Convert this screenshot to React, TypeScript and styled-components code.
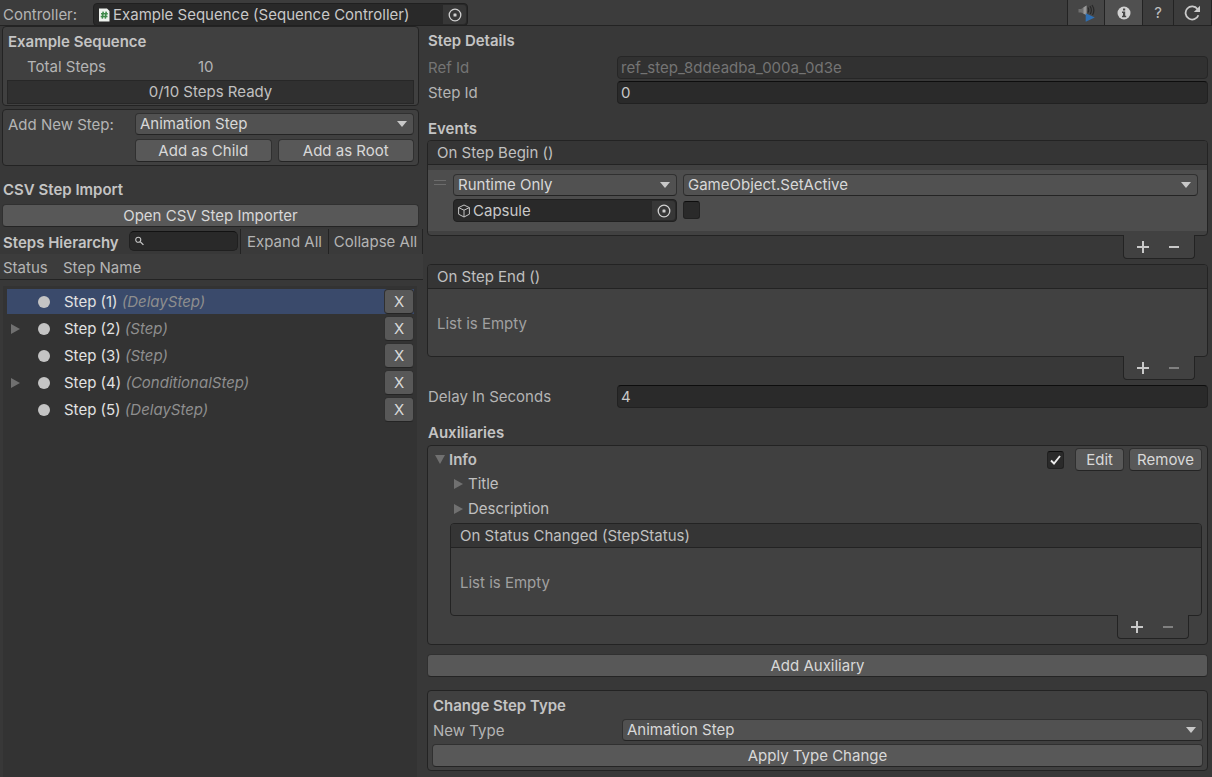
import React, { useId, useState } from "react";
import styled, { createGlobalStyle, css } from "styled-components";

const GlobalStyle = createGlobalStyle`
  *, *::before, *::after { box-sizing: border-box; }
  body {
    margin: 0;
    background: #383838;
    color: #b4b4b4;
    font: 400 15px/22px Inter, "Liberation Sans", sans-serif;
  }
  button, input, select { font: inherit; color: inherit; margin: 0; }
  h2, h3, p { margin: 0; font-size: 15px; line-height: 22px; }
`;

const line = "#232323";

const Window = styled.div`
  min-height: 100vh;
  display: flex;
  flex-direction: column;
`;

const Toolbar = styled.header`
  display: flex;
  align-items: stretch;
  height: 26px;
  background: #3c3c3c;
  border-bottom: 1px solid ${line};
`;

const ToolbarLabel = styled.span`
  width: 93px;
  padding: 4px 0 0 3px;
`;

const ToolbarSpacer = styled.div`
  flex: 1;
`;

const ToolbarButton = styled.button<{ $width: number; $tone?: string }>`
  display: flex;
  align-items: center;
  justify-content: center;
  width: ${(p) => p.$width}px;
  padding: 0;
  border: 0;
  border-left: 1px solid ${line};
  background: ${(p) => p.$tone ?? "transparent"};
  color: #c0c0c0;

  &:last-child { border-right: 1px solid ${line}; }
`;

const ObjectBox = styled.div<{ $toolbar?: boolean }>`
  display: flex;
  align-items: center;
  height: 23px;
  padding: 1px 1px 1px 4px;
  gap: 3px;
  background: #292929;
  border: 1px solid #202020;
  border-radius: 4px;
  color: #c8c8c8;
  ${(p) =>
    p.$toolbar &&
    css`
      width: 375px;
      margin-top: 3px;
    `}
`;

const ObjectName = styled.span`
  flex: 1;
  white-space: nowrap;
`;

const PickerButton = styled.button`
  display: flex;
  align-items: center;
  justify-content: center;
  align-self: stretch;
  width: 23px;
  padding: 0;
  border: 0;
  border-radius: 0 3px 3px 0;
  background: #373737;
  color: #d0d0d0;
`;

const Columns = styled.div`
  flex: 1;
  display: flex;
  align-items: stretch;
`;

const Sidebar = styled.aside`
  width: 423px;
  flex: none;
  display: flex;
  flex-direction: column;
`;

const SidebarTop = styled.div`
  display: flex;
  flex-direction: column;
  gap: 3px;
  padding: 0 4px 0 2px;
`;

const Details = styled.main`
  flex: 1;
  min-width: 0;
  padding: 4px 4px 6px 4px;
`;

const Panel = styled.section`
  background: #404040;
  border: 1px solid ${line};
  border-radius: 4px;
`;

const SummaryPanel = styled(Panel)`
  height: 80px;
  padding: 4px 4px 2px;
`;

const AddPanel = styled(Panel)`
  display: grid;
  grid-template-columns: 121px 1fr 1fr;
  column-gap: 6px;
  row-gap: 3px;
  padding: 3px 4px 3px 5px;

  > label { grid-column: 1; padding-top: 1px; }
  > div { grid-column: 2 / 4; }
  > button:nth-of-type(1) { grid-column: 2; }
`;

const Heading = styled.h2`
  font-weight: 600;
  color: #c4c4c4;
  padding-left: 1px;
`;

const TotalRow = styled.dl`
  display: flex;
  margin: 3px 0 2px;
  padding-left: 20px;

  dt { width: 171px; }
  dd { margin: 0; }
`;

const Progress = styled.div`
  height: 24px;
  line-height: 22px;
  text-align: center;
  background: #303030;
  border: 1px solid #272727;
  color: #c0c0c0;
`;

const Button = styled.button<{ $block?: boolean }>`
  display: block;
  height: 23px;
  min-width: 49px;
  padding: 0 7px;
  line-height: 21px;
  text-align: center;
  white-space: nowrap;
  background: #585858;
  border: 1px solid #303030;
  border-bottom-color: #242424;
  border-radius: 4px;
  color: #d8d8d8;
  ${(p) => p.$block && "width: 100%;"}
`;

const SelectBox = styled.div`
  position: relative;
  min-width: 0;

  select {
    appearance: none;
    display: block;
    width: 100%;
    height: 22px;
    padding: 0 24px 0 4px;
    line-height: 20px;
    background: #515151;
    border: 1px solid #303030;
    border-bottom-color: #242424;
    border-radius: 4px;
    color: #d8d8d8;
  }

  svg {
    position: absolute;
    right: 7px;
    top: 8px;
    pointer-events: none;
  }
`;

const HierarchyBar = styled.div`
  display: flex;
  align-items: stretch;
  height: 25px;
  margin-top: 2px;
  padding-left: 3px;
`;

const HierarchyTitle = styled.h2`
  width: 126px;
  padding-top: 3px;
  font-weight: 600;
  color: #c4c4c4;
  white-space: nowrap;
`;

const SearchBox = styled.label`
  display: flex;
  align-items: center;
  flex: 1;
  min-width: 0;
  height: 20px;
  margin: 2px 2px 0 0;
  padding-left: 5px;
  background: #292929;
  border: 1px solid #202020;
  border-top-color: #121212;
  border-radius: 5px;

  input {
    min-width: 0;
    width: 100%;
    height: 18px;
    padding: 0 4px;
    border: 0;
    background: transparent;
    outline: 0;
  }
`;

const BarButton = styled.button<{ $width: number; $last?: boolean }>`
  width: ${(p) => p.$width}px;
  padding: 0;
  line-height: 25px;
  text-align: center;
  white-space: nowrap;
  border: 0;
  border-left: 1px solid ${line};
  background: #3a3a3a;
  ${(p) => p.$last && `border-right: 1px solid ${line};`}
`;

const StepTable = styled.table`
  flex: 1;
  display: flex;
  flex-direction: column;

  tr { display: flex; }
  th, td { padding: 0; }

  thead {
    display: block;
    height: 26px;
    background: #3c3c3c;
    border-bottom: 1px solid ${line};
  }
  th {
    font-weight: 400;
    text-align: left;
    line-height: 27px;
  }
  th:first-child { width: 63px; padding-left: 3px; }

  tbody {
    flex: 1;
    display: block;
    margin: 6px 6px 0 3px;
    padding: 3px 3px 0 4px;
    background: #333333;
  }
`;

const StepRow = styled.tr<{ $selected: boolean }>`
  height: 25px;
  margin-bottom: 2px;
  line-height: 25px;
  background: ${(p) => (p.$selected ? "#3a4a6b" : "transparent")};
`;

const StatusCell = styled.td`
  display: flex;
  align-items: center;
  width: 57px;
`;

const FoldSlot = styled.span`
  display: flex;
  width: 31px;
  padding-left: 4px;
`;

const StatusDot = styled.span`
  width: 12px;
  height: 12px;
  border-radius: 50%;
  background: #c4c4c4;
`;

const NameCell = styled.td`
  flex: 1;
  color: #e2e2e2;

  em { color: #8e8e8e; }
`;

const RemoveStep = styled(Button)`
  width: 30px;
  min-width: 0;
  height: 25px;
  padding: 0;
  line-height: 23px;
`;

const FieldRow = styled.div<{ $muted?: boolean }>`
  display: grid;
  grid-template-columns: 190px 1fr;

  label { padding: 1px 0 0 1px; ${(p) => p.$muted && "color: #747474;"} }
`;

const Fields = styled.div`
  display: flex;
  flex-direction: column;
  gap: 2px;
  padding-top: 4px;
`;

const TextInput = styled.input`
  width: 100%;
  height: 23px;
  padding: 0 3px;
  background: #2a2a2a;
  border: 1px solid #212121;
  border-top-color: #0d0d0d;
  border-radius: 4px;
  color: #c8c8c8;

  &:disabled {
    background: #313131;
    border-color: #262626;
    color: #747474;
  }
`;

const Section = styled.div`
  margin-top: 14px;
`;

const ImportTitle = styled(Heading)`
  margin-top: 10px;
`;

const EventWrap = styled.div`
  padding-bottom: 5px;
`;

const EventBox = styled.div`
  background: #414141;
  border: 1px solid ${line};
  border-radius: 4px;
  overflow: hidden;
`;

const EventTitle = styled.h3`
  height: 24px;
  padding: 1px 9px 0;
  font-weight: 400;
  color: #c0c0c0;
  background: #353535;
  border-bottom: 1px solid ${line};
`;

const EmptyNote = styled.p`
  height: 67px;
  padding: 24px 9px 0;
  color: #a0a0a0;
`;

const Listener = styled.div`
  display: grid;
  grid-template-columns: 25px 224px 1fr;
  row-gap: 3px;
  margin: 5px 0 4px;
  padding: 4px 9px 9px 0;
  height: 61px;
  background: #4d4d4d;

  > :nth-child(3) { margin-left: 6px; }
  > :nth-child(4) { grid-column: 2; }
  > :nth-child(5) { margin: 2px 0 0 6px; }
`;

const Grip = styled.span`
  width: 12px;
  height: 5px;
  margin: 6px 0 0 6px;
  border-top: 1px solid #6c6c6c;
  border-bottom: 1px solid #6c6c6c;
`;

const EventFooter = styled.div`
  position: relative;
  display: flex;
  width: 72px;
  height: 24px;
  margin: -1px 13px 0 auto;
  background: #414141;
  border: 1px solid ${line};
  border-top: 0;
  border-radius: 0 0 4px 4px;

  button {
    display: flex;
    align-items: center;
    justify-content: center;
    width: 31px;
    padding: 0;
    border: 0;
    background: transparent;
    color: #c8c8c8;
  }
  button:first-child { margin-left: 3px; }
  button:disabled { color: #808080; }
`;

const CheckBox = styled.span`
  position: relative;
  display: inline-flex;
  width: 17px;
  height: 18px;

  input {
    appearance: none;
    width: 17px;
    height: 18px;
    background: #2a2a2a;
    border: 1px solid #212121;
    border-top-color: #0d0d0d;
    border-radius: 3px;
  }
  svg {
    position: absolute;
    left: 3px;
    top: 4px;
    pointer-events: none;
    visibility: hidden;
  }
  input:checked + svg { visibility: visible; }
`;

const AuxPanel = styled(Panel)`
  margin: 1px 0 9px;
  padding: 2px 5px 0 7px;
`;

const AuxHeader = styled.div`
  display: flex;
  align-items: center;
  height: 23px;
  gap: 5px;

  > :first-child { flex: 1; }
  > span { margin-right: 6px; }
`;

const Foldout = styled.button<{ $bold?: boolean }>`
  display: flex;
  align-items: center;
  gap: ${(p) => (p.$bold ? 4 : 5)}px;
  height: 22px;
  padding: 0;
  border: 0;
  background: transparent;
  text-align: left;
  color: #c0c0c0;
  font-weight: ${(p) => (p.$bold ? 600 : 400)};
`;

const AuxBody = styled.div`
  display: flex;
  flex-direction: column;
  gap: 3px;
  padding: 2px 0 0 15px;

  > button { margin-left: 4px; }
`;

const ChangePanel = styled(Panel)`
  margin-top: 13px;
  padding: 4px 4px 3px;

  ${FieldRow} { margin: 2px 0; }
`;

const Caret = () => (
  <svg width="10" height="6" viewBox="0 0 10 6" aria-hidden="true">
    <path d="M0 0h10L5 6z" fill="#c8c8c8" />
  </svg>
);

const Fold = ({ open }: { open?: boolean }) =>
  open ? (
    <svg width="10" height="9" viewBox="0 0 10 9" aria-hidden="true">
      <path d="M0 0h10L5 9z" fill="#707070" />
    </svg>
  ) : (
    <svg width="9" height="10" viewBox="0 0 9 10" aria-hidden="true">
      <path d="M0 0v10l9-5z" fill="#707070" />
    </svg>
  );

const Target = () => (
  <svg width="14" height="14" viewBox="0 0 14 14" aria-hidden="true">
    <circle cx="7" cy="7" r="5.8" fill="none" stroke="currentColor" strokeWidth="1.3" />
    <rect x="5.5" y="5.5" width="3" height="3" rx=".6" fill="currentColor" />
  </svg>
);

const ScriptIcon = () => (
  <svg width="12" height="14" viewBox="0 0 12 14" aria-hidden="true">
    <path d="M1 .5h8L11.500 3v10.500H1z" fill="#eef2ee" />
    <path d="M5.200 3.600 4.300 10.600M8.200 3.600 7.300 10.600M3 5.700h6.800M2.700 8.500h6.800" stroke="#3f8a4b" strokeWidth="1.600" fill="none" />
  </svg>
);

const CubeIcon = () => (
  <svg width="12" height="14" viewBox="0 0 12 14" fill="none" stroke="#c4c4c4" strokeLinejoin="round" aria-hidden="true">
    <path d="M6 1 11.400 3.600v6.600L6 13 .6 10.200V3.600zM.6 3.600 6 6.200l5.400-2.600M6 6.200V13" />
  </svg>
);

const SearchIcon = () => (
  <svg width="10" height="10" viewBox="0 0 10 10" fill="none" stroke="#c8c8c8" aria-hidden="true">
    <circle cx="3.6" cy="3.6" r="2.8" strokeWidth="1.2" />
    <path d="m5.7 5.7 3.6 3.6" strokeWidth="1.5" />
  </svg>
);

const AudioIcon = () => (
  <svg width="18" height="18" viewBox="0 0 18 18" aria-hidden="true">
    <path d="M1.500 5H4L9.500 1.500v9.500L4 8.500H1.500z" fill="#6e6e6e" />
    <path d="M6.500 3.400 9.500 1.500v9.500l-3-1.300z" fill="#989898" />
    <path d="M11 3.500q1.500 2.500 0 5M13 2q2.600 4 .3 8M15 1q3.400 5 .5 10" fill="none" stroke="#282828" strokeWidth="1.200" />
    <path d="M8.700 9.300 17.800 13.500 8.700 17.700z" fill="#2f6fb2" />
  </svg>
);

const InfoIcon = () => (
  <svg width="14" height="14" viewBox="0 0 14 14" aria-hidden="true">
    <circle cx="7" cy="7" r="6.5" fill="#d2d2d2" />
    <path d="M6 2.500h2.200v2H6zM5 5.500h3.200v4.300h1v1.500H5V9.800h1V6.900H5z" fill="#484848" />
  </svg>
);

const RefreshIcon = () => (
  <svg width="17" height="16" viewBox="0 0 17 16" aria-hidden="true">
    <path d="M13.500 4A6.600 6.600 0 1 0 14.400 10.200" fill="none" stroke="#cacaca" strokeWidth="1.800" />
    <path d="M16 .8V7H9.800z" fill="#cacaca" />
  </svg>
);

const Plus = () => (
  <svg width="12" height="12" viewBox="0 0 12 12" aria-hidden="true">
    <path d="M0 6h12M6 0v12" stroke="currentColor" strokeWidth="2" />
  </svg>
);

const Minus = () => (
  <svg width="10" height="12" viewBox="0 0 10 12" aria-hidden="true">
    <path d="M0 6h10" stroke="currentColor" strokeWidth="2" />
  </svg>
);

const Tick = () => (
  <svg width="11" height="10" viewBox="0 0 11 10" fill="none" aria-hidden="true">
    <path d="m1 5.500 3 3L10 1" stroke="#ececec" strokeWidth="1.900" />
  </svg>
);

function Dropdown({ id, label, options }: { id?: string; label?: string; options: string[] }) {
  return (
    <SelectBox>
      <select id={id} aria-label={label}>
        {options.map((o) => (
          <option key={o}>{o}</option>
        ))}
      </select>
      <Caret />
    </SelectBox>
  );
}

function ObjectField({ icon, name, toolbar }: { icon: React.ReactNode; name: string; toolbar?: boolean }) {
  return (
    <ObjectBox $toolbar={toolbar}>
      {icon}
      <ObjectName>{name}</ObjectName>
      <PickerButton aria-label={`Select ${name}`}>
        <Target />
      </PickerButton>
    </ObjectBox>
  );
}

function Toggle({ label, on }: { label: string; on?: boolean }) {
  return (
    <CheckBox>
      <input type="checkbox" aria-label={label} defaultChecked={on} />
      <Tick />
    </CheckBox>
  );
}

function TextField({ label, value, disabled }: { label: string; value: string; disabled?: boolean }) {
  const id = useId();
  return (
    <FieldRow $muted={disabled}>
      <label htmlFor={id}>{label}</label>
      <TextInput id={id} defaultValue={value} disabled={disabled} />
    </FieldRow>
  );
}

function EventList({ title, children }: { title: string; children?: React.ReactNode }) {
  return (
    <EventWrap>
      <EventBox>
        <EventTitle>{title}</EventTitle>
        {children ?? <EmptyNote>List is Empty</EmptyNote>}
      </EventBox>
      <EventFooter>
        <button aria-label="Add listener"><Plus /></button>
        <button aria-label="Remove listener" disabled={!children}><Minus /></button>
      </EventFooter>
    </EventWrap>
  );
}

const steps = [
  { name: "Step (1)", type: "DelayStep", parent: false },
  { name: "Step (2)", type: "Step", parent: true },
  { name: "Step (3)", type: "Step", parent: false },
  { name: "Step (4)", type: "ConditionalStep", parent: true },
  { name: "Step (5)", type: "DelayStep", parent: false },
];

const stepTypes = ["Animation Step", "Conditional Step", "Delay Step"];

export default function App() {
  const [selected, setSelected] = useState(0);

  return (
    <Window>
      <GlobalStyle />
      <Toolbar>
        <ToolbarLabel>Controller:</ToolbarLabel>
        <ObjectField toolbar icon={<ScriptIcon />} name="Example Sequence (Sequence Controller)" />
        <ToolbarSpacer />
        <ToolbarButton $width={37} $tone="#464646" aria-label="Audio"><AudioIcon /></ToolbarButton>
        <ToolbarButton $width={38} $tone="#505050" aria-label="Info"><InfoIcon /></ToolbarButton>
        <ToolbarButton $width={31} aria-label="Help">?</ToolbarButton>
        <ToolbarButton $width={39} aria-label="Refresh"><RefreshIcon /></ToolbarButton>
      </Toolbar>

      <Columns>
        <Sidebar>
          <SidebarTop>
            <SummaryPanel>
              <Heading>Example Sequence</Heading>
              <TotalRow>
                <dt>Total Steps</dt>
                <dd>10</dd>
              </TotalRow>
              <Progress role="progressbar" aria-valuemin={0} aria-valuemax={10} aria-valuenow={0}>
                0/10 Steps Ready
              </Progress>
            </SummaryPanel>
            <AddPanel>
              <label htmlFor="new-step">Add New Step:</label>
              <Dropdown id="new-step" options={stepTypes} />
              <Button>Add as Child</Button>
              <Button>Add as Root</Button>
            </AddPanel>
            <ImportTitle>CSV Step Import</ImportTitle>
            <Button $block>Open CSV Step Importer</Button>
          </SidebarTop>

          <HierarchyBar>
            <HierarchyTitle>Steps Hierarchy</HierarchyTitle>
            <SearchBox>
              <SearchIcon />
              <input type="search" aria-label="Search steps" />
            </SearchBox>
            <BarButton $width={88}>Expand All</BarButton>
            <BarButton $width={95} $last>Collapse All</BarButton>
          </HierarchyBar>

          <StepTable>
            <thead>
              <tr>
                <th>Status</th>
                <th>Step Name</th>
              </tr>
            </thead>
            <tbody>
              {steps.map((s, i) => (
                <StepRow key={s.name} $selected={i === selected} onClick={() => setSelected(i)}>
                  <StatusCell>
                    <FoldSlot>{s.parent && <Fold />}</FoldSlot>
                    <StatusDot />
                  </StatusCell>
                  <NameCell>
                    {s.name} <em>({s.type})</em>
                  </NameCell>
                  <td>
                    <RemoveStep aria-label={`Remove ${s.name}`}>X</RemoveStep>
                  </td>
                </StepRow>
              ))}
            </tbody>
          </StepTable>
        </Sidebar>

        <Details>
          <Heading>Step Details</Heading>
          <Fields>
            <TextField label="Ref Id" value="ref_step_8ddeadba_000a_0d3e" disabled />
            <TextField label="Step Id" value="0" />
          </Fields>

          <Section>
            <Heading>Events</Heading>
            <EventList title="On Step Begin ()">
              <Listener>
                <Grip />
                <Dropdown label="Call state" options={["Runtime Only", "Off", "Editor And Runtime"]} />
                <Dropdown label="Function" options={["GameObject.SetActive", "No Function"]} />
                <ObjectField icon={<CubeIcon />} name="Capsule" />
                <Toggle label="Argument" />
              </Listener>
            </EventList>
            <EventList title="On Step End ()" />
            <TextField label="Delay In Seconds" value="4" />
          </Section>

          <Section>
            <Heading>Auxiliaries</Heading>
            <AuxPanel>
              <AuxHeader>
                <Foldout $bold><Fold open />Info</Foldout>
                <Toggle label="Info enabled" on />
                <Button>Edit</Button>
                <Button>Remove</Button>
              </AuxHeader>
              <AuxBody>
                <Foldout><Fold />Title</Foldout>
                <Foldout><Fold />Description</Foldout>
                <EventList title="On Status Changed (StepStatus)" />
              </AuxBody>
            </AuxPanel>
            <Button $block>Add Auxiliary</Button>
          </Section>

          <ChangePanel>
            <Heading>Change Step Type</Heading>
            <FieldRow>
              <label htmlFor="new-type">New Type</label>
              <Dropdown id="new-type" options={stepTypes} />
            </FieldRow>
            <Button $block>Apply Type Change</Button>
          </ChangePanel>
        </Details>
      </Columns>
    </Window>
  );
}
